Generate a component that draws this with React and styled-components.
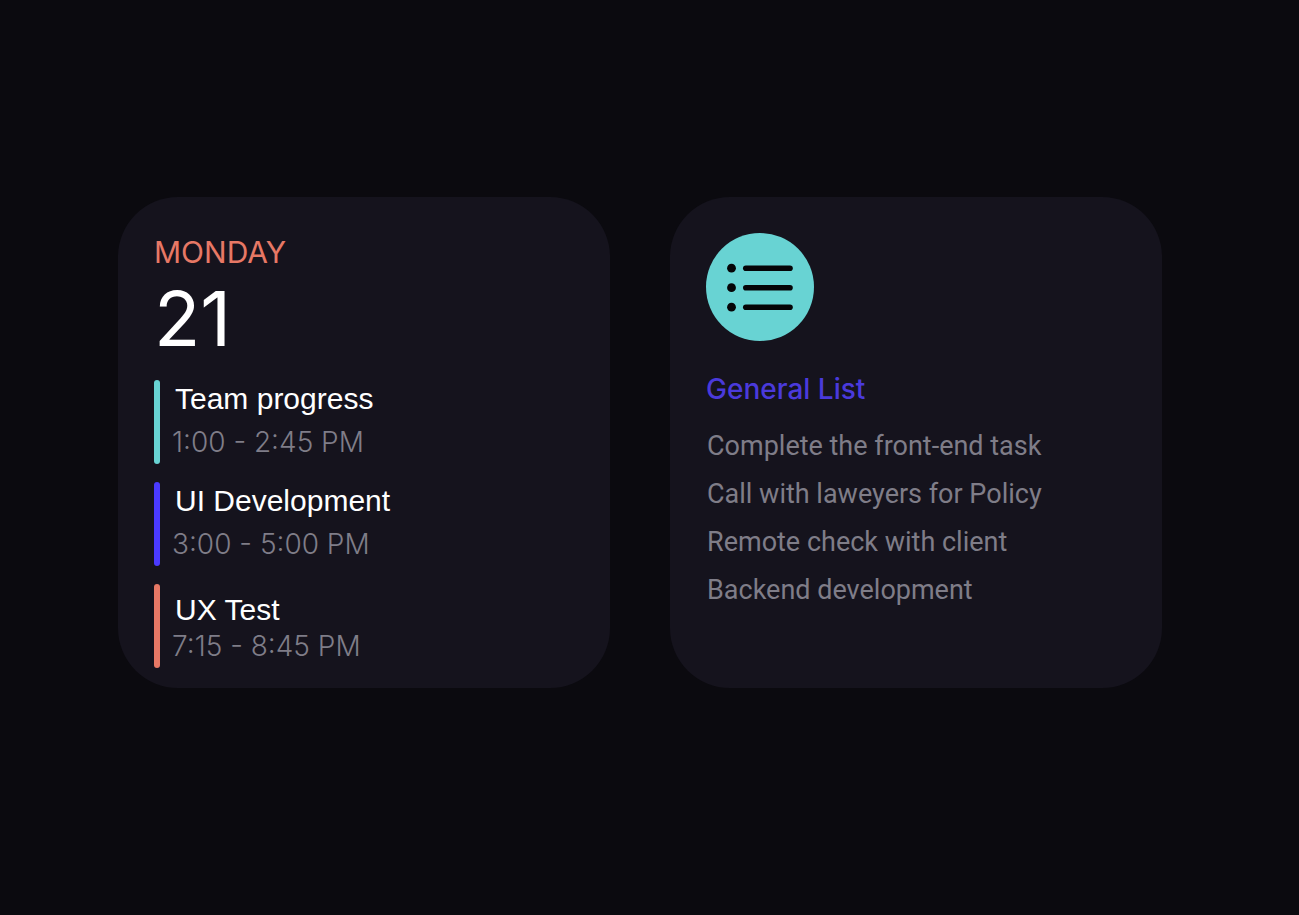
import React from 'react'
import styled, { createGlobalStyle } from 'styled-components';

const events = [
    { title: 'Team progress', time: '1:00 - 2:45 PM', color: '#68d3d3' },
    { title: 'UI Development', time: '3:00 - 5:00 PM', color: '#4a3aff' },
    { title: 'UX Test', time: '7:15 - 8:45 PM', color: '#e77865', compact: true },
]

const tasks = [
    'Complete the front-end task',
    'Call with laweyers for Policy',
    'Remote check with client',
    'Backend development',
]

function ListIcon() {
    return (
        <svg width="108" height="108" viewBox="0 0 108 108" aria-hidden="true">
            <circle cx="54" cy="54" r="54" fill="#68d3d3" />
            {[35.2, 54.7, 74.2].map((y) => (
                <g key={y}>
                    <circle cx="25.5" cy={y} r="4.4" fill="#050507" />
                    <path d={`M39.8 ${y}H84`} stroke="#050507" strokeWidth="5.6" strokeLinecap="round" />
                </g>
            ))}
        </svg>
    )
}

function App() {
    return (
        <>
            <GlobalStyle />
            <Page>
                <Card>
                    <Day>MONDAY</Day>
                    <DayNumber>21</DayNumber>
                    <Events>
                        {events.map((event) => (
                            <Event key={event.title}>
                                <Bar $color={event.color} />
                                <EventText $compact={event.compact}>
                                    <EventTitle>{event.title}</EventTitle>
                                    <EventTime>{event.time}</EventTime>
                                </EventText>
                            </Event>
                        ))}
                    </Events>
                </Card>

                <Card>
                    <ListIcon />
                    <ListHeading>General List</ListHeading>
                    <Tasks>
                        {tasks.map((task) => (
                            <Task key={task}>{task}</Task>
                        ))}
                    </Tasks>
                </Card>
            </Page>
        </>
    )
}

const GlobalStyle = createGlobalStyle`
    * {
        box-sizing: border-box;
    }

    body {
        margin: 0;
        background: #0b0a0f;
        font-family: Inter, 'Liberation Sans', sans-serif;
    }
`

const Page = styled.main`
    display: grid;
    grid-template-columns: 1fr 1fr;
    gap: 60px;
    padding: 197px 137px 197px 118px;
`

const Card = styled.section`
    padding: 36px 36px 20px;
    border-radius: 60px;
    background: #15131d;

    svg {
        display: block;
    }
`

const Day = styled.h2`
    margin: 0;
    color: #e77865;
    font-size: 30px;
    font-weight: 400;
    line-height: 38px;
`

const DayNumber = styled.p`
    margin: 0;
    color: #fff;
    font-size: 76px;
    font-weight: 400;
    line-height: 94px;
`

const Events = styled.ul`
    display: flex;
    flex-direction: column;
    gap: 18px;
    margin: 15px 0 0;
    padding: 0;
    list-style: none;
`

const Event = styled.li`
    display: flex;
    gap: 12px;
    min-height: 84px;
`

const Bar = styled.span`
    flex: none;
    width: 6px;
    border-radius: 3px;
    background: ${({ $color }) => $color};
`

const EventText = styled.div`
    display: flex;
    flex-direction: column;
    justify-content: flex-end;
    gap: ${({ $compact }) => ($compact ? '3px' : '10px')};
    padding-bottom: 6px;
`

const EventTitle = styled.h3`
    margin: 0;
    padding-left: 3px;
    color: #fff;
    font-family: 'Liberation Sans', Arial, sans-serif;
    font-size: 30px;
    font-weight: 400;
    line-height: 34px;
`

const EventTime = styled.p`
    margin: 0;
    color: #7f7d88;
    font-size: 28px;
    font-weight: 300;
    line-height: 32px;
`

const ListHeading = styled.h2`
    margin: 28px 0 0;
    color: #4a3adb;
    font-size: 28px;
    font-weight: 500;
    line-height: 40px;
`

const Tasks = styled.ul`
    margin: 13px 0 0;
    padding: 0 0 0 1px;
    list-style: none;
`

const Task = styled.li`
    color: #7f7d88;
    font-family: Roboto, sans-serif;
    font-size: 27px;
    line-height: 48px;
`

export default App
